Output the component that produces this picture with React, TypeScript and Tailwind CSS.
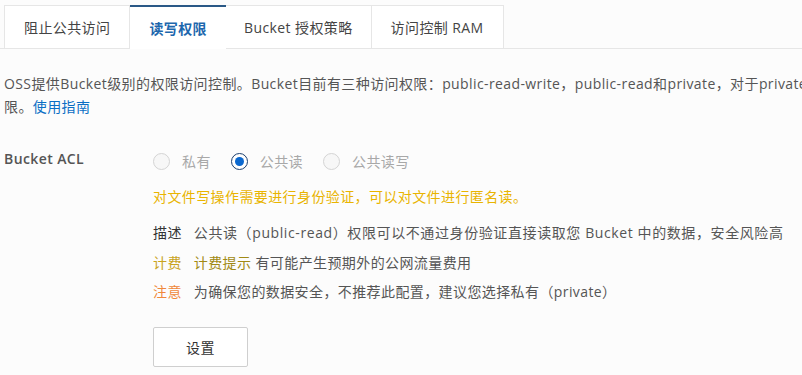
import React from 'react'

const tabs = ['阻止公共访问', '读写权限', 'Bucket 授权策略', '访问控制 RAM']

function Radio({ label, checked }: { label: string; checked?: boolean }) {
  return (
    <label className="flex items-center gap-[12px]">
      {checked ? (
        <span className="grid h-[17px] w-[17px] place-items-center rounded-full border border-[#1c3f6e] bg-white">
          <span className="h-[9px] w-[9px] rounded-full bg-[#0b68cf]" />
        </span>
      ) : (
        <span className="h-[17px] w-[17px] rounded-full border border-[#d4d4d4] bg-[#f7f7f7]" />
      )}
      <span className="text-[#a8a8a8]">{label}</span>
    </label>
  )
}

export default function App() {
  return (
    <div
      className="h-[375px] w-[802px] overflow-hidden bg-[#fcfcfc] text-[14px] tracking-[0.4px] text-[#555]"
      style={{ fontFamily: '"Open Sans", "Noto Sans CJK SC", sans-serif' }}
    >
      <div className="flex border-b border-[#e6e6e6] pl-[4px] pt-[5px]">
        {tabs.map((t, i) =>
          i === 1 ? (
            <div
              key={t}
              className="-mb-px flex h-[44px] items-center border-t-2 border-[#2a5886] bg-white px-[19px] font-bold text-[#1d67ad]"
            >
              {t}
            </div>
          ) : (
            <div
              key={t}
              className={`flex h-[43px] items-center border-t border-[#e6e6e6] bg-white text-[#444] ${
                i === 0 ? 'border-l border-r px-[19px]' : i === 2 ? 'border-r px-[18px]' : 'border-r px-[19px]'
              }`}
            >
              {t}
            </div>
          )
        )}
      </div>

      <div className="pl-[4px] pt-[23px] leading-[23px]">
        <p className="whitespace-nowrap">
          OSS提供Bucket级别的权限访问控制。Bucket目前有三种访问权限：public-read-write，public-read和private，对于private的Bucket，只有拥有者有读写权
        </p>
        <p>
          限。<a className="text-[#0b6ec4]">使用指南</a>
        </p>
      </div>

      <div className="mt-[31px] flex pl-[4px]">
        <div className="-mt-[2px] w-[149px] font-semibold leading-[24px] text-[#555]">Bucket ACL</div>
        <div className="flex flex-col">
          <div className="flex h-[24px] items-center gap-[20px]">
            <Radio label="私有" />
            <Radio label="公共读" checked />
            <Radio label="公共读写" />
          </div>
          <div className="mt-[12px] leading-[24px] text-[#e9b400]">
            对文件写操作需要进行身份验证，可以对文件进行匿名读。
          </div>
          <div className="mt-[12px] flex gap-[12px] whitespace-nowrap leading-[24px]">
            <span className="text-[#333]">描述</span>
            <span className="tracking-[0.6px]">公共读（public-read）权限可以不通过身份验证直接读取您 Bucket 中的数据，安全风险高</span>
          </div>
          <div className="mt-[6px] flex gap-[12px] whitespace-nowrap leading-[24px]">
            <span className="text-[#c9a41f]">计费</span>
            <span>
              <span className="text-[#a18a14]">计费提示</span> 有可能产生预期外的公网流量费用
            </span>
          </div>
          <div className="mt-[5px] flex gap-[12px] whitespace-nowrap leading-[24px]">
            <span className="text-[#f0883a]">注意</span>
            <span>为确保您的数据安全，不推荐此配置，建议您选择私有（private）</span>
          </div>
          <button className="mt-[23px] h-[40px] w-[95px] rounded-[2px] border border-[#cfcfcf] bg-white text-[#333]">
            设置
          </button>
        </div>
      </div>
    </div>
  )
}
